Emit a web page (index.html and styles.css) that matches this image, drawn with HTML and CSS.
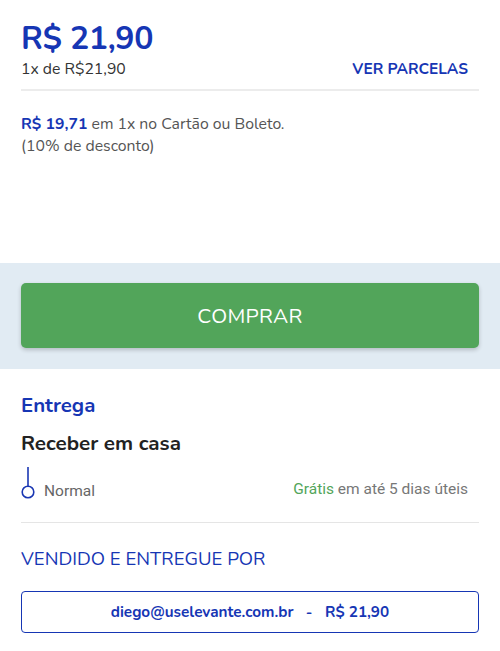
FILE: index.html
```html
<!DOCTYPE html>
<html lang="pt-BR">
<head>
<meta charset="utf-8">
<link rel="stylesheet" href="styles.css">
</head>
<body>
<div class="page">
  <section class="price-block">
    <div class="price">R$ 21,90</div>
    <div class="installments">
      <span class="inst-text">1x de R$21,90</span>
      <span class="ver">VER PARCELAS</span>
    </div>
  </section>
  <section class="discount">
    <p><span class="disc-price">R$ 19,71</span> em 1x no Cartão ou Boleto.</p>
    <p>(10% de desconto)</p>
  </section>
  <section class="buy-band">
    <button class="buy">COMPRAR</button>
  </section>
  <section class="delivery">
    <h2 class="title">Entrega</h2>
    <h3 class="subtitle">Receber em casa</h3>
    <div class="option">
      <svg class="opt-icon" width="14" height="34" viewBox="0 0 14 34">
        <line x1="7" y1="1" x2="7" y2="20" stroke="#1a37b3" stroke-width="1.6"/>
        <circle cx="7" cy="26" r="5.8" fill="none" stroke="#1a37b3" stroke-width="1.6"/>
      </svg>
      <span class="opt-name">Normal</span>
      <span class="opt-info"><span class="free">Grátis</span> em até 5 dias úteis</span>
    </div>
  </section>
  <section class="seller">
    <h2 class="seller-title">VENDIDO E ENTREGUE POR</h2>
    <div class="seller-box">diego@uselevante.com.br&nbsp;&nbsp;&nbsp;-&nbsp;&nbsp;&nbsp;R$ 21,90</div>
  </section>
</div>
</body>
</html>
```

FILE: styles.css
```css
* { box-sizing: border-box; }
html, body { margin: 0; padding: 0; background: #fff; }
body { font-family: "Nunito", "Lato", "Open Sans", sans-serif; color: #333; }
.page { width: 500px; }

.price-block { padding: 20px 21px 0 21px; }
.price {
  font-size: 32px; font-weight: 700; color: #1636b4; line-height: 38px;
  letter-spacing: -0.3px;
}
.installments {
  display: flex; justify-content: space-between; align-items: center;
  padding: 1px 11px 10px 0; border-bottom: 2px solid #ececec;
}
.inst-text { font-size: 15.75px; color: #333; line-height: 20px; }
.ver { font-size: 15.5px; font-weight: 700; color: #1636b4; line-height: 20px; }

.discount { padding: 22px 21px 0 21px; height: 172px; }
.discount p { margin: 0; font-size: 15.8px; line-height: 22px; color: #555; }
.disc-price { color: #1636b4; font-weight: 700; }

.buy-band { background: #e1ebf3; padding: 20px 21px 21px 21px; }
.buy {
  display: block; width: 100%; height: 65px; border: 0; border-radius: 5px;
  background: #52a55a; color: #fff; font-family: inherit; font-size: 20.8px;
  letter-spacing: 0.3px; box-shadow: 0 2px 4px rgba(0,0,0,0.2);
}

.delivery { padding: 24px 21px 0 21px; }
.title { margin: 0; font-size: 20.4px; font-weight: 700; color: #1636b4; line-height: 24px; }
.subtitle { margin: 14px 0 0 0; font-size: 20.6px; font-weight: 700; color: #222; line-height: 24px; }
.option {
  display: flex; align-items: flex-end; margin-top: 11px; padding-bottom: 22px;
  border-bottom: 1.5px solid #e5e5e5;
}
.opt-icon { display: block; }
.opt-name { font-family: Roboto, sans-serif; font-size: 15.5px; color: #666; margin-left: 9px; line-height: 20px; margin-bottom: -1px; }
.opt-info { margin-left: auto; margin-right: 11px; font-family: Roboto, sans-serif; font-size: 15.5px; color: #777; line-height: 20px; margin-bottom: 1px; }
.free { color: #52a55a; }

.seller { padding: 24px 21px 0 21px; }
.seller-title { margin: 0; font-size: 18.6px; font-weight: 400; color: #1636b4; line-height: 24px; }
.seller-box {
  margin-top: 20px; height: 42px; border: 1.5px solid #1636b4; border-radius: 4px;
  display: flex; align-items: center; justify-content: center;
  font-size: 15.3px; font-weight: 700; color: #1636b4;
}
```
